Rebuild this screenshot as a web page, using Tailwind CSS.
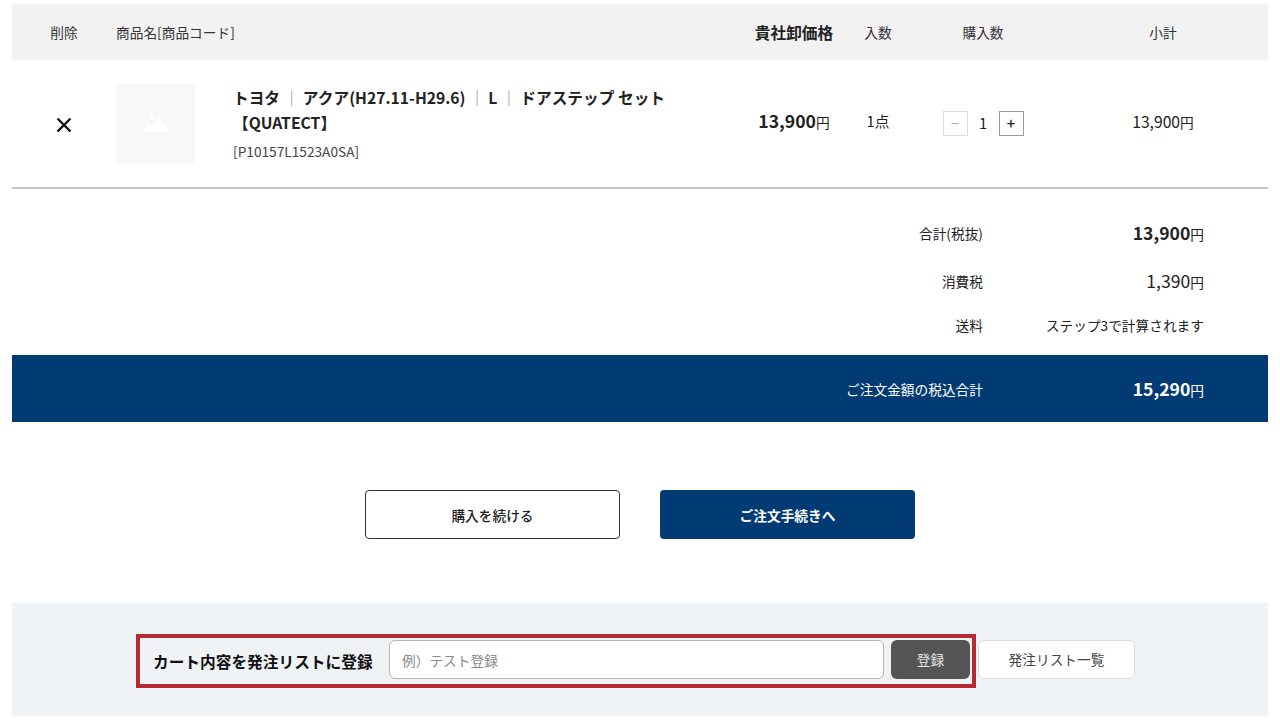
<!DOCTYPE html>
<html lang="ja">
<head>
<meta charset="UTF-8">
<meta name="viewport" content="width=device-width, initial-scale=1.0">
<script src="https://cdn.jsdelivr.net/npm/@tailwindcss/browser@4"></script>
<title>カート</title>
</head>
<body class="bg-white text-[#222] font-['Noto_Sans_CJK_JP',sans-serif] overflow-hidden">
<div class="h-[720px] px-3 pt-1">

    <!-- ヘッダー -->
    <div class="flex items-center h-14 pt-px bg-[#f2f2f2] text-[13.7px] text-[#333]">
        <div class="w-[104px] text-center">削除</div>
        <div class="w-[624px]">商品名[商品コード]</div>
        <div class="w-[108px] text-center text-[15.7px] font-bold text-[#222]">貴社卸価格</div>
        <div class="w-[60px] text-center">入数</div>
        <div class="w-[150px] text-center">購入数</div>
        <div class="w-[210px] text-center">小計</div>
    </div>

    <!-- 商品 -->
    <div class="flex items-center h-[129px] border-b-2 border-[#c4c4c4]">
        <div class="w-[104px] flex justify-center mt-[3px]">
            <svg class="w-4 h-4" viewBox="0 0 16 16" fill="none" stroke="#111" stroke-width="2.4"><path d="M1.5 1.5l13 13M14.500 1.5l-13 13"/></svg>
        </div>
        <div class="w-[624px] flex items-center">
            <div class="w-[79px] h-[79px] bg-[#f8f8f8] flex items-center justify-center shrink-0">
                <svg class="w-7 h-5" viewBox="0 0 28 20" fill="#fff"><circle cx="10" cy="3" r="2"/><path d="M0 18l7-8 3 3 7-10 11 15z"/></svg>
            </div>
            <div class="ml-[38px] w-[500px]">
                <p class="text-[15.7px] font-bold leading-[25px] -mt-[2px]">トヨタ <span class="font-normal text-[#888]">｜</span> アクア(H27.11-H29.6) <span class="font-normal text-[#888]">｜</span> L <span class="font-normal text-[#888]">｜</span> ドアステップ セット<br>【QUATECT】</p>
                <p class="text-[13.7px] leading-5 mt-[6px] text-[#444]">[P10157L1523A0SA]</p>
            </div>
        </div>
        <div class="w-[108px] text-center font-bold text-[17.6px] -mt-1">13,900<span class="text-[13.7px] font-normal">円</span></div>
        <div class="w-[60px] text-center text-[14.7px] -mt-1">1点</div>
        <div class="w-[150px] flex justify-center items-center -mt-px text-[14.7px]">
            <span class="w-[25px] h-[25px] flex items-center justify-center border border-[#d9dde0] text-[#aaa]">−</span>
            <span class="w-[31px] text-center">1</span>
            <span class="w-[25px] h-[25px] flex items-center justify-center border border-[#999] font-medium text-[#222]">+</span>
        </div>
        <div class="w-[210px] text-center text-[15.7px] -mt-1">13,900<span class="text-[13.7px]">円</span></div>
    </div>

    <!-- 合計 -->
    <div class="pt-[19px] pb-[10px] pr-16 text-[13.7px]">
        <div class="flex justify-end items-center h-[50px]">
            <span>合計(税抜)</span>
            <span class="w-[221px] text-right text-[17.6px] font-bold">13,900<span class="text-[13.7px] font-normal">円</span></span>
        </div>
        <div class="flex justify-end items-center h-[47px]">
            <span>消費税</span>
            <span class="w-[221px] text-right text-[17.6px]">1,390<span class="text-[13.7px]">円</span></span>
        </div>
        <div class="flex justify-end items-center h-10">
            <span>送料</span>
            <span class="w-[221px] text-right">ステップ3で計算されます</span>
        </div>
    </div>
    <div class="flex justify-end items-center h-[67px] pt-[2px] pr-16 bg-[#023b73] text-white text-[13.7px]">
        <span>ご注文金額の税込合計</span>
        <span class="w-[221px] text-right text-[17.6px] font-bold">15,290<span class="text-[13.7px] font-normal">円</span></span>
    </div>

    <!-- ボタン -->
    <div class="flex justify-center gap-10 mt-[68px]">
        <a class="w-[255px] h-[49px] pt-[2px] flex items-center justify-center rounded border border-[#333] text-[13.7px] font-medium">購入を続ける</a>
        <a class="w-[255px] h-[49px] pt-[2px] flex items-center justify-center rounded bg-[#023b73] text-white text-[13.7px] font-bold">ご注文手続きへ</a>
    </div>

    <!-- 発注リスト -->
    <div class="flex items-start h-[113px] mt-[64px] pt-[31px] pl-[124px] bg-[#f0f3f6]">
        <div class="flex items-start w-[840px] h-[54px] pt-[2px] border-4 border-[#b82a33] pl-[13px]">
            <span class="w-[236px] self-center text-[15.7px] font-bold text-[#111]">カート内容を発注リストに登録</span>
            <input type="text" placeholder="例）テスト登録" class="w-[495px] h-[39px] px-3 text-[13.7px] bg-white border border-[#b5b5b5] rounded-md placeholder:text-[#8a8a8a]">
            <button class="w-[79px] h-[39px] ml-[7px] rounded-md bg-[#555] text-[#e5e5e5] text-[13.7px]">登録</button>
        </div>
        <button class="w-[157px] h-[39px] ml-[2px] mt-[6px] rounded-md bg-white border border-[#dcdcdc] text-[13.7px] text-[#444]">発注リスト一覧</button>
    </div>
</div>
</body>
</html>
